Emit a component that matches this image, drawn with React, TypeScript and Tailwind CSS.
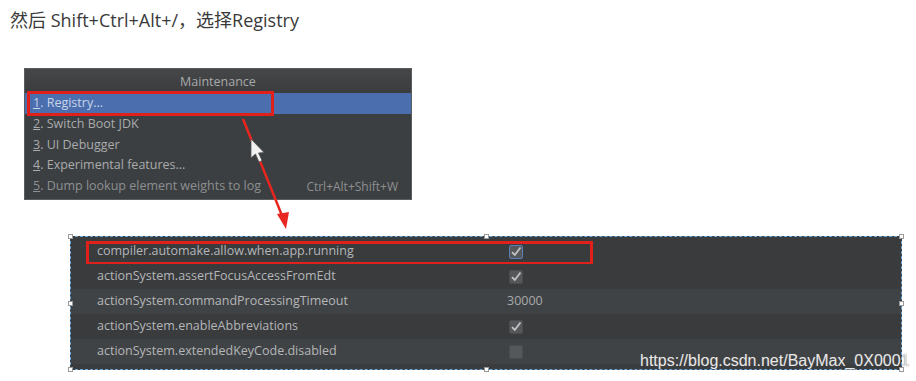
import React from 'react'

const ui = { fontFamily: '"Open Sans", "Noto Sans", sans-serif' }

const menuItems = [
    { n: '1', label: '. Registry...', selected: true },
    { n: '2', label: '. Switch Boot JDK' },
    { n: '3', label: '. UI Debugger' },
    { n: '4', label: '. Experimental features...' },
    { n: '5', label: '. Dump lookup element weights to log', shortcut: 'Ctrl+Alt+Shift+W', dim: true }
]

type Row = { key: string; value: 'on' | 'off' | string; focus?: boolean }

const rows: Row[] = [
    { key: 'compiler.automake.allow.when.app.running', value: 'on', focus: true },
    { key: 'actionSystem.assertFocusAccessFromEdt', value: 'on' },
    { key: 'actionSystem.commandProcessingTimeout', value: '30000' },
    { key: 'actionSystem.enableAbbreviations', value: 'on' },
    { key: 'actionSystem.extendedKeyCode.disabled', value: 'off' }
]

// 复选框
const CheckBox = ({ checked, focus }: { checked: boolean; focus?: boolean }) => (
    <div
        className={`flex h-[14px] w-[14px] items-center justify-center rounded-[2px] bg-[#55585b] ${
            focus ? 'border border-[#5a7fb8]' : 'border border-[#4a4c4f]'
        }`}
    >
        {checked && (
            <svg width="12" height="12" viewBox="0 0 12 12">
                <path d="M2 6.2 L4.8 9 L10.5 1.5" fill="none" stroke="#c4c4c4" strokeWidth="1.8" />
            </svg>
        )}
    </div>
)

const Handle = ({ className }: { className: string }) => (
    <div className={`absolute h-[5px] w-[5px] border border-[#9a9a9a] bg-white ${className}`} />
)

export default function App() {
    return (
        <div className="relative h-[381px] w-[916px] overflow-hidden bg-white">
            {/* 标题 */}
            <div
                className="pl-[10px] pt-[8px] text-[18px] leading-[24px] text-[#3a3a3a]"
                style={{ fontFamily: '"Open Sans", "Noto Sans CJK SC", sans-serif' }}
            >
                然后 Shift+Ctrl+Alt+/，选择Registry
            </div>

            {/* Maintenance 菜单 */}
            <div
                className="ml-[24px] mt-[36px] flex h-[132px] w-[388px] flex-col border border-[#5a5c5e] bg-[#3c3f41] pb-[2px]"
                style={ui}
            >
                <div className="flex h-[24px] items-center justify-center bg-gradient-to-b from-[#454749] to-[#3a3c3e] pt-[2px] text-[12.5px] text-[#a9a9a9]">
                    Maintenance
                </div>
                {menuItems.map((item) => (
                    <div
                        key={item.n}
                        className={`relative flex h-[21px] items-center pl-[8px] pr-[13px] text-[12.5px] ${
                            item.selected ? 'bg-[#4b6eaf] text-[#c9d4e8]' : item.dim ? 'text-[#8d8f91]' : 'text-[#a9abad]'
                        }`}
                    >
                        <span className="overflow-hidden whitespace-nowrap">
                            <span className="underline">{item.n}</span>
                            {item.label}
                        </span>
                        {item.shortcut && (
                            <span className="ml-auto shrink-0 pl-[20px] text-[12px] text-[#8d8f91]">{item.shortcut}</span>
                        )}
                        {/* 红框标注 */}
                        {item.selected && (
                            <div className="absolute -top-[2px] left-[2px] h-[25px] w-[247px] border-[3px] border-[#e0201b]" />
                        )}
                    </div>
                ))}
            </div>

            {/* Registry 表格 */}
            <div
                className="relative ml-[70px] mt-[36px] h-[134px] w-[832px] border border-dashed border-[#6aa7d8] bg-[#3a3c3e] pt-[2px]"
                style={ui}
            >
                {rows.map((r, i) => (
                    <div
                        key={r.key}
                        className={`relative flex h-[25px] items-center text-[12.5px] text-[#b4b6b8] ${
                            i === 2 || i === 4 ? 'bg-[#404345]' : 'bg-[#393b3d]'
                        }`}
                    >
                        <div className="w-[436px] shrink-0 pl-[26px]">{r.key}</div>
                        {r.value === 'on' || r.value === 'off' ? (
                            <div className="pl-[2px]">
                                <CheckBox checked={r.value === 'on'} focus={r.focus} />
                            </div>
                        ) : (
                            <span className="text-[#a8aaac]">{r.value}</span>
                        )}
                        {r.focus && (
                            <div className="absolute left-[15px] top-[2px] h-[24px] w-[507px] border-[3px] border-[#e0201b]" />
                        )}
                    </div>
                ))}
                <Handle className="-left-[3px] -top-[3px]" />
                <Handle className="left-[413px] -top-[3px]" />
                <Handle className="-right-[3px] -top-[3px]" />
                <Handle className="-left-[3px] top-[64px]" />
                <Handle className="-right-[3px] top-[64px]" />
                <Handle className="-left-[3px] -bottom-[3px]" />
                <Handle className="left-[413px] -bottom-[3px]" />
                <Handle className="-right-[3px] -bottom-[3px]" />

                {/* 水印 */}
                <div
                    className="absolute -bottom-[3px] left-[569px] whitespace-nowrap text-[16px] leading-[22px] text-[#e8e8e8]"
                    style={{ fontFamily: '"Liberation Sans", Arial, sans-serif', textShadow: '0 0 1px #555' }}
                >
                    https://blog.csdn.net/BayMax_0X0001
                </div>
            </div>

            {/* 箭头和鼠标 */}
            <svg className="pointer-events-none absolute left-0 top-0" width="916" height="381">
                <line x1="243" y1="119" x2="283" y2="218" stroke="#e8261f" strokeWidth="2.5" />
                <polygon points="286,229 277,214 289,212" fill="#e8261f" />
                <path
                    d="M251 139 L251 158 L255.5 154 L259 162 L262 160.5 L258.5 153 L264 152.5 Z"
                    fill="#f2f2f2"
                    stroke="#555"
                    strokeWidth="0.8"
                />
            </svg>
        </div>
    )
}
